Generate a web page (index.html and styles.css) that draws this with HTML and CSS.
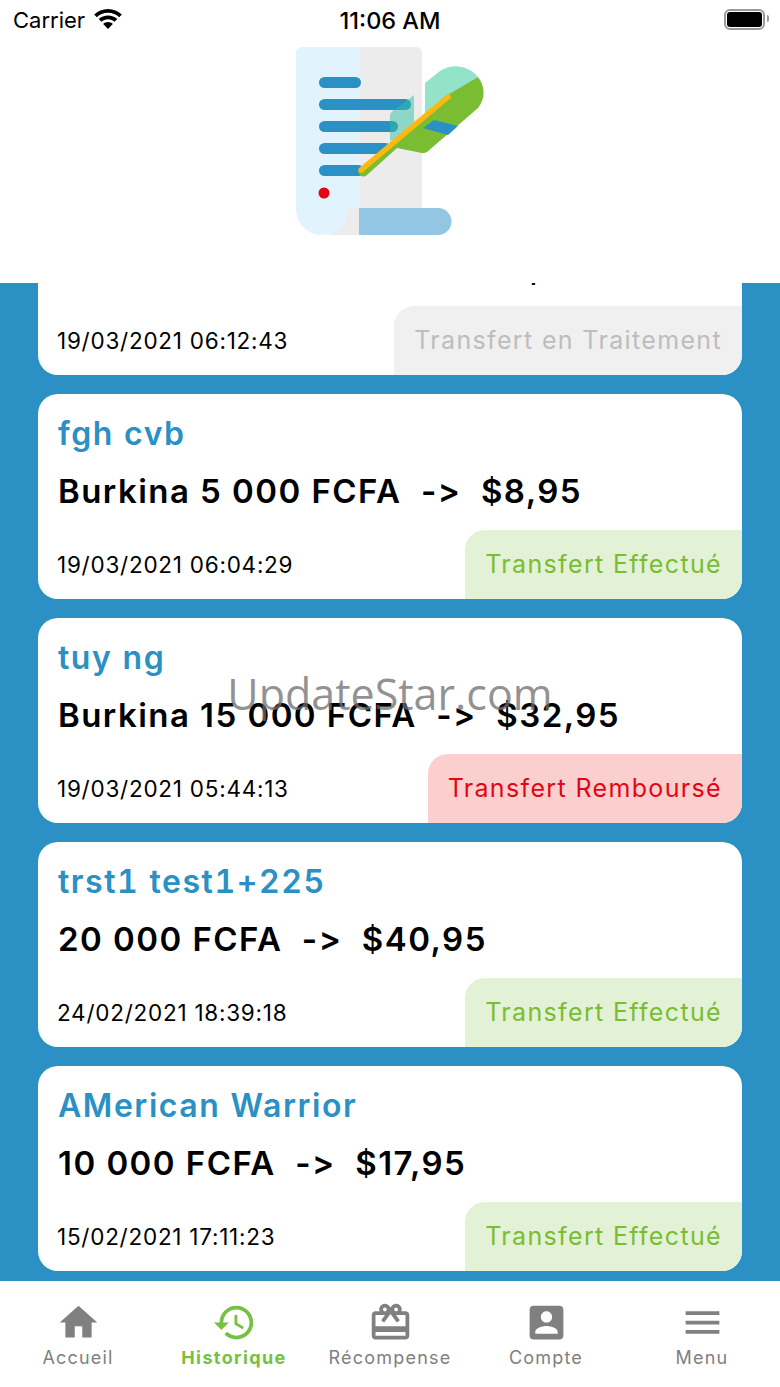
FILE: index.html
```html
<!DOCTYPE html>
<html lang="fr">

<head>
  <meta charset="UTF-8" />
  <meta name="viewport" content="width=device-width, initial-scale=1" />
  <title>Historique</title>
  <link rel="stylesheet" href="styles.css">
</head>

<body>
  <div class="app">
    <!-- Header -->
    <header class="top">
      <div class="status">
        <div class="status-left">
          <span>Carrier</span>
          <svg class="wifi" viewBox="0 0 28 20" width="28" height="20">
            <path d="M14 0C8.600 0 3.800 2.100.2 5.500l2.600 2.700C5.700 5.500 9.600 3.800 14 3.800s8.300 1.700 11.200 4.400l2.600-2.700C24.200 2.100 19.400 0 14 0z" />
            <path d="M14 6.500c-3.600 0-6.800 1.400-9.300 3.600l2.700 2.700c1.700-1.600 4.100-2.600 6.600-2.600s4.900 1 6.600 2.600l2.700-2.700C20.800 7.900 17.600 6.500 14 6.500z" />
            <path d="M14 13c-1.900 0-3.500.7-4.800 1.900L14 20l4.800-5.100C17.500 13.700 15.900 13 14 13z" />
          </svg>
        </div>
        <span class="clock">11:06 AM</span>
        <div class="battery"><i></i></div>
      </div>
      <svg class="logo" viewBox="280 40 220 205" width="220" height="205">
        <path fill="#ececec" d="M340 47h76a6 6 0 0 1 6 6v155h-62v27h-30z" />
        <path fill="#e1f4fd" d="M360 47h-58a6 6 0 0 0-6 6v155c0 15 11 27 26 27 15 0 26-12 26-27h12z" />
        <path fill="#93c6e2" d="M359 208h79a13.500 13.500 0 0 1 0 27h-79z" />
        <g fill="#2b90c3">
          <rect x="319" y="77" width="42" height="11" rx="5.500" />
          <rect x="319" y="99" width="92" height="11" rx="5.500" />
          <rect x="319" y="121" width="79" height="11" rx="5.500" />
          <rect x="319" y="143" width="72" height="11" rx="5.500" />
          <rect x="319" y="165" width="45" height="11" rx="5.500" />
        </g>
        <circle cx="324" cy="193" r="5.500" fill="#e30613" />
        <path fill="#2fc0a0" fill-opacity=".5" d="M394 110l20-15v38l-24 8v-26a8 8 0 0 1 4-5z" />
        <path fill="#92e3c9" d="M425 83l15-12c12-8 28-6 38 6l-26 22-27 22z" />
        <path fill="#7abd32" d="M478 77c7 9 8 21 0 31l-51 44c-2 1-3 1-5 1l-25-5-30 27c-3 2-5 2-7 0l-2-3 88-76z" />
        <path fill="#2b90c3" d="M423 128l11-8 24 6-10 9z" />
        <path fill="none" stroke="#fbb80f" stroke-width="5.500" stroke-linecap="round" d="M361 170l87-73" />
      </svg>
    </header>

    <!-- Transfer list -->
    <main class="list">
      <article class="card card-cut">
        <p class="amount">Bénin 10 000 FCFA&nbsp; -&gt;&nbsp; $20,95</p>
        <div class="card-foot">
          <span class="date">19/03/2021 06:12:43</span>
          <span class="state state-wait">Transfert en Traitement</span>
        </div>
      </article>
      <article class="card">
        <h2 class="name">fgh cvb</h2>
        <p class="amount">Burkina 5 000 FCFA&nbsp; -&gt;&nbsp; $8,95</p>
        <div class="card-foot">
          <span class="date">19/03/2021 06:04:29</span>
          <span class="state state-ok">Transfert Effectué</span>
        </div>
      </article>
      <article class="card">
        <h2 class="name">tuy ng</h2>
        <p class="amount">Burkina 15 000 FCFA&nbsp; -&gt;&nbsp; $32,95</p>
        <div class="card-foot">
          <span class="date">19/03/2021 05:44:13</span>
          <span class="state state-back">Transfert Remboursé</span>
        </div>
      </article>
      <article class="card">
        <h2 class="name">trst1 test1+225</h2>
        <p class="amount">20 000 FCFA&nbsp; -&gt;&nbsp; $40,95</p>
        <div class="card-foot">
          <span class="date">24/02/2021 18:39:18</span>
          <span class="state state-ok">Transfert Effectué</span>
        </div>
      </article>
      <article class="card">
        <h2 class="name">AMerican Warrior</h2>
        <p class="amount">10 000 FCFA&nbsp; -&gt;&nbsp; $17,95</p>
        <div class="card-foot">
          <span class="date">15/02/2021 17:11:23</span>
          <span class="state state-ok">Transfert Effectué</span>
        </div>
      </article>
    </main>

    <!-- Tab bar -->
    <nav class="tabs">
      <div class="tab">
        <svg viewBox="0 0 24 24" width="45" height="45"><path d="M10 20v-6h4v6h5v-8h3L12 3 2 12h3v8z" /></svg>
        <span>Accueil</span>
      </div>
      <div class="tab tab-on">
        <svg viewBox="0 0 24 24" width="45" height="45"><path d="M13 3c-4.970 0-9 4.030-9 9H1l3.890 3.890.07.14L9 12H6c0-3.870 3.130-7 7-7s7 3.130 7 7-3.130 7-7 7c-1.930 0-3.680-.79-4.940-2.060l-1.420 1.420C8.270 19.990 10.510 21 13 21c4.970 0 9-4.030 9-9s-4.030-9-9-9zm-1 5v5l4.280 2.540.72-1.210-3.500-2.080V8H12z" /></svg>
        <span>Historique</span>
      </div>
      <div class="tab">
        <svg viewBox="0 0 24 24" width="45" height="45"><path d="M20 6h-2.180c.11-.31.18-.65.18-1 0-1.660-1.340-3-3-3-1.050 0-1.960.54-2.500 1.350l-.5.67-.5-.68C10.960 2.540 10.050 2 9 2 7.340 2 6 3.340 6 5c0 .35.07.69.18 1H4c-1.110 0-1.990.89-1.990 2L2 19c0 1.110.89 2 2 2h16c1.110 0 2-.89 2-2V8c0-1.110-.89-2-2-2zm-5-2c.55 0 1 .45 1 1s-.45 1-1 1-1-.45-1-1 .45-1 1-1zM9 4c.55 0 1 .45 1 1s-.45 1-1 1-1-.45-1-1 .45-1 1-1zm11 15H4v-2h16v2zm0-5H4V8h5.080L7 10.830 8.620 12 11 8.760l1-1.360 1 1.360L15.380 12 17 10.830 14.920 8H20v6z" /></svg>
        <span>Récompense</span>
      </div>
      <div class="tab">
        <svg viewBox="0 0 24 24" width="45" height="45"><path d="M3 5v14c0 1.100.89 2 2 2h14c1.100 0 2-.9 2-2V5c0-1.100-.9-2-2-2H5c-1.110 0-2 .9-2 2zm12 4c0 1.660-1.340 3-3 3s-3-1.340-3-3 1.340-3 3-3 3 1.340 3 3zm-9 8c0-2 4-3.100 6-3.100s6 1.100 6 3.100v1H6v-1z" /></svg>
        <span>Compte</span>
      </div>
      <div class="tab">
        <svg viewBox="0 0 24 24" width="45" height="45"><path d="M3 18h18v-2H3v2zm0-5h18v-2H3v2zm0-7v2h18V6H3z" /></svg>
        <span>Menu</span>
      </div>
    </nav>

    <div class="watermark">UpdateStar.com</div>
  </div>
</body>

</html>
```

FILE: styles.css
```css
* {
  box-sizing: border-box;
}

body {
  margin: 0;
  font-family: 'Inter', 'Liberation Sans', sans-serif;
  background: #fff;
  color: #000;
}

.app {
  position: relative;
  width: 780px;
  height: 1387px;
  display: flex;
  flex-direction: column;
  overflow: hidden;
}

/* Header */
.top {
  height: 283px;
  flex: none;
  display: flex;
  flex-direction: column;
  align-items: center;
  background: #fff;
  position: relative;
  z-index: 1;
}

.status {
  width: 100%;
  height: 40px;
  padding: 0 10px 0 13px;
  display: flex;
  align-items: center;
  justify-content: space-between;
  position: relative;
  font-size: 22px;
  flex: none;
}

.status-left {
  display: flex;
  align-items: center;
  gap: 9px;
}

.wifi {
  fill: #000;
  margin-top: -2px;
}

.clock {
  position: absolute;
  left: 0;
  right: 0;
  text-align: center;
  font-size: 23.500px;
  font-weight: 500;
}

.battery {
  width: 41px;
  height: 21px;
  border: 2px solid #9a9a9a;
  border-radius: 6px;
  padding: 1px;
  position: relative;
  margin: -2px 5px 0 0;
}

.battery i {
  display: block;
  height: 100%;
  background: #000;
  border-radius: 3px;
}

.battery::after {
  content: '';
  position: absolute;
  right: -6px;
  top: 4px;
  width: 2px;
  height: 7px;
  background: #9a9a9a;
  border-radius: 0 2px 2px 0;
}

.logo {
  flex: none;
}

/* List */
.list {
  flex: 1;
  min-height: 0;
  overflow: hidden;
  background: #2b90c3;
  padding: 0 38px;
  display: flex;
  flex-direction: column;
  gap: 19px;
}

.card {
  background: #fff;
  border-radius: 20px;
  height: 205px;
  flex: none;
  display: flex;
  flex-direction: column;
  overflow: hidden;
  padding-top: 20px;
}

/* scrolled under the header, only its bottom part shows */
.card-cut {
  margin-top: -113px;
  padding-top: 60px;
}

.name {
  margin: 0 0 0 20px;
  font-size: 32px;
  line-height: 40px;
  font-weight: 600;
  letter-spacing: 1.55px;
  font-variant-numeric: tabular-nums;
  color: #2b90c3;
}

.amount {
  margin: 17px 0 0 20px;
  font-size: 33px;
  line-height: 40px;
  font-weight: 600;
  letter-spacing: 1.45px;
}

.card-foot {
  margin-top: auto;
  height: 69px;
  display: flex;
  align-items: center;
  justify-content: space-between;
  padding-left: 19px;
}

.date {
  font-size: 22.500px;
  letter-spacing: .75px;
}

.state {
  height: 100%;
  display: flex;
  align-items: center;
  padding: 0 20px 2px 20px;
  font-size: 25px;
  letter-spacing: 1.35px;
  border-top-left-radius: 20px;
}

.state-wait {
  background: #f0f0f0;
  color: #bdbdbd;
}

.state-ok {
  background: #e3f2d6;
  color: #7abd32;
}

.state-back {
  background: #fccfcf;
  color: #e30613;
}

/* Tab bar */
.tabs {
  height: 106px;
  flex: none;
  display: grid;
  grid-template-columns: repeat(5, 156px);
  background: #fff;
  position: relative;
}

.tab {
  display: flex;
  flex-direction: column;
  align-items: center;
  padding-top: 19px;
  color: #808080;
  fill: #808080;
  font-size: 18px;
  letter-spacing: 1.2px;
  line-height: 22px;
}

.tab span {
  margin-top: 2px;
}

.tab-on {
  color: #76c043;
  fill: #76c043;
  font-weight: 700;
  letter-spacing: 1.4px;
}

/* Watermark over the page */
.watermark {
  position: absolute;
  left: 0;
  right: 0;
  top: 669px;
  text-align: center;
  font-size: 43px;
  line-height: 50px;
  color: rgba(110, 110, 110, .75);
  font-family: 'Open Sans', sans-serif;
}
```
